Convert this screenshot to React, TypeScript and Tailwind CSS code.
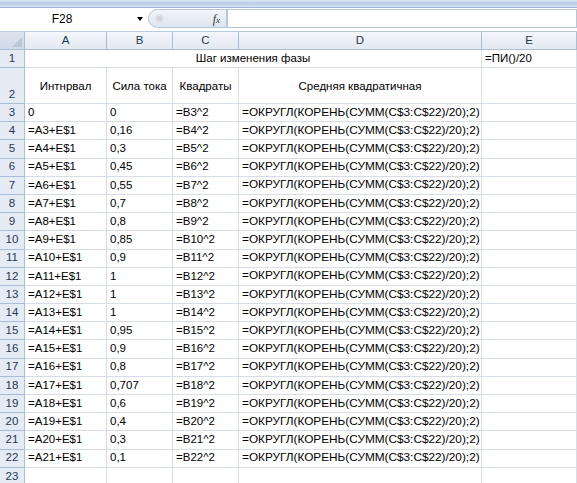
import React from "react";

const D = "=ОКРУГЛ(КОРЕНЬ(СУММ(C$3:C$22)/20);2)";

const rows: [string, string, string][] = [
  ["0", "0", "=B3^2"],
  ["=A3+E$1", "0,16", "=B4^2"],
  ["=A4+E$1", "0,3", "=B5^2"],
  ["=A5+E$1", "0,45", "=B6^2"],
  ["=A6+E$1", "0,55", "=B7^2"],
  ["=A7+E$1", "0,7", "=B8^2"],
  ["=A8+E$1", "0,8", "=B9^2"],
  ["=A9+E$1", "0,85", "=B10^2"],
  ["=A10+E$1", "0,9", "=B11^2"],
  ["=A11+E$1", "1", "=B12^2"],
  ["=A12+E$1", "1", "=B13^2"],
  ["=A13+E$1", "1", "=B14^2"],
  ["=A14+E$1", "0,95", "=B15^2"],
  ["=A15+E$1", "0,9", "=B16^2"],
  ["=A16+E$1", "0,8", "=B17^2"],
  ["=A17+E$1", "0,707", "=B18^2"],
  ["=A18+E$1", "0,6", "=B19^2"],
  ["=A19+E$1", "0,4", "=B20^2"],
  ["=A20+E$1", "0,3", "=B21^2"],
  ["=A21+E$1", "0,1", "=B22^2"],
];

const cellBase = "border-r border-b border-[#d7dde8] px-[3px] flex items-center whitespace-nowrap overflow-hidden";
const cell = `h-[18px] ${cellBase}`;
const bodyCell = `h-[18.2px] ${cellBase}`;
const rowHdrBase =
  "border-r border-b border-[#a9bdd4] bg-[#e4ebf5] flex items-center justify-center text-[#27384f]";
const rowHdr = `h-[18px] ${rowHdrBase}`;
const bodyRowHdr = `h-[18.2px] ${rowHdrBase}`;
const colHdr =
  "h-[18px] border-r border-b border-[#a9bdd4] bg-linear-to-b from-[#f4f7fb] to-[#e3e9f1] flex items-center justify-center text-[#27384f]";

export default function App() {
  return (
    <div className="w-[577px] h-[483px] overflow-hidden bg-white font-['Liberation_Sans',Arial,sans-serif] text-[11.5px] text-black leading-none">
      {/* top band */}
      <div className="h-[8px] bg-linear-to-b from-[#dbe7f5] via-[#b8cde6] to-[#d6e3f2] border-b border-[#9fb7d3]" />
      {/* formula bar */}
      <div className="h-[21px] flex items-stretch bg-white">
        <div className="w-[124px] flex items-center justify-center text-[12px] text-black">F28</div>
        <div className="w-[24px] flex items-center justify-end pr-[5px]">
          <div className="w-0 h-0 border-l-[3px] border-r-[3px] border-t-[4px] border-l-transparent border-r-transparent border-t-black" />
        </div>
        <div className="w-[79px] my-[1px] rounded-l-full border border-[#b5c4d6] bg-linear-to-b from-[#f2f5f9] to-[#dde5ef] flex items-center justify-between pl-[6px] pr-[6px]">
          <div className="w-[9px] h-[9px] rounded-full bg-radial from-[#c9ced5] to-[#eef1f5]" />
          <span className="font-['Liberation_Serif',serif] italic text-[12px] text-[#333]">
            f<span className="text-[9px]">x</span>
          </span>
        </div>
        <div className="flex-1 border border-[#b7c6d8] my-[1px] bg-white" />
      </div>
      <div className="h-[2px] bg-white" />
      {/* grid */}
      <div className="grid grid-cols-[25px_82px_66px_66px_243px_1fr] border-t border-[#b8c9dc]">
        {/* header row */}
        <div className="h-[18px] border-r border-b border-[#a9bdd4] bg-linear-to-b from-[#dce4ee] to-[#cfd9e6] relative">
          <svg className="absolute right-[2px] bottom-[2px]" width="10" height="10" viewBox="0 0 10 10">
            <polygon points="10,0 10,10 0,10" fill="#b9c8da" />
          </svg>
        </div>
        {["A", "B", "C", "D", "E"].map((c) => (
          <div key={c} className={colHdr}>
            {c}
          </div>
        ))}

        {/* row 1 */}
        <div className={rowHdr}>1</div>
        <div className={`${cell} col-span-4 justify-center`}>Шаг изменения фазы</div>
        <div className={cell}>=ПИ()/20</div>

        {/* row 2 */}
        <div className="h-[36px] border-r border-b border-[#a9bdd4] bg-[#e4ebf5] flex items-end justify-center pb-[3px] text-[#27384f]">
          2
        </div>
        {["Интнрвал", "Сила тока", "Квадраты", "Средняя квадратичная", ""].map((t, i) => (
          <div
            key={i}
            className="h-[36px] border-r border-b border-[#d7dde8] flex items-center justify-center pt-[3px] whitespace-nowrap overflow-hidden"
          >
            {t}
          </div>
        ))}

        {rows.map((r, i) => (
          <React.Fragment key={i}>
            <div className={bodyRowHdr}>{i + 3}</div>
            <div className={bodyCell}>{r[0]}</div>
            <div className={bodyCell}>{r[1]}</div>
            <div className={bodyCell}>{r[2]}</div>
            <div className={`${bodyCell} text-[11.8px] px-[2px]`}>{D}</div>
            <div className={bodyCell}></div>
          </React.Fragment>
        ))}

        <div className={bodyRowHdr}>23</div>
        <div className={bodyCell}></div>
        <div className={bodyCell}></div>
        <div className={bodyCell}></div>
        <div className={bodyCell}></div>
        <div className={bodyCell}></div>
      </div>
    </div>
  );
}
